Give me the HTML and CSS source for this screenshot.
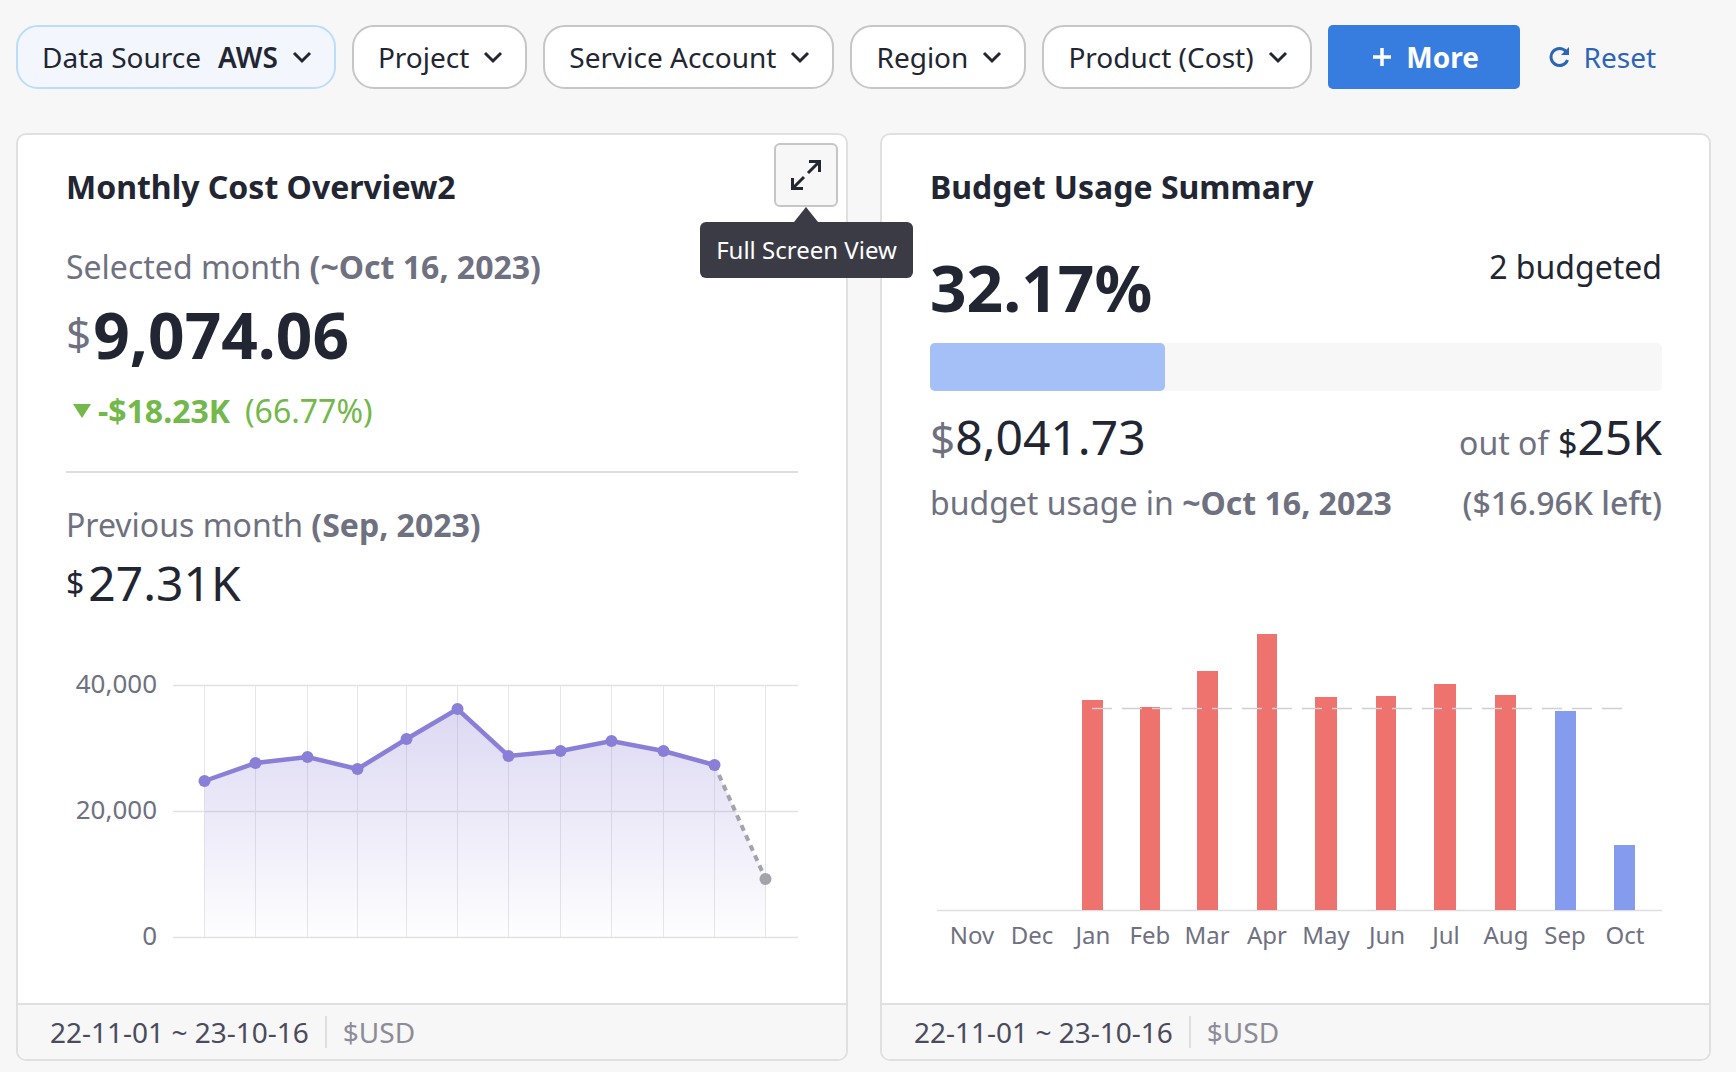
FILE: index.html
```html
<!DOCTYPE html>
<html lang="en">
<head>
    <meta charset="UTF-8">
    <title>Cost Dashboard</title>
    <link rel="stylesheet" href="styles.css">
</head>
<body>

    <div class="filters">
        <button class="filter filter-active"><span>Data Source</span><b class="filter-value">AWS</b><svg class="chevron" viewBox="0 0 20 13"><path d="M2 2l8 8 8-8"/></svg></button>
        <button class="filter"><span>Project</span><svg class="chevron" viewBox="0 0 20 13"><path d="M2 2l8 8 8-8"/></svg></button>
        <button class="filter"><span>Service Account</span><svg class="chevron" viewBox="0 0 20 13"><path d="M2 2l8 8 8-8"/></svg></button>
        <button class="filter"><span>Region</span><svg class="chevron" viewBox="0 0 20 13"><path d="M2 2l8 8 8-8"/></svg></button>
        <button class="filter"><span>Product (Cost)</span><svg class="chevron" viewBox="0 0 20 13"><path d="M2 2l8 8 8-8"/></svg></button>
        <button class="more-btn">
            <svg class="plus" viewBox="0 0 20 20"><path d="M10 1v18M1 10h18"/></svg>
            More</button>
        <button class="reset-btn">
            <svg class="reset-icon" viewBox="0 0 22 22"><path d="M18.5 14a8.500 8.500 0 1 1-1.500-8.500"/><path class="reset-head" d="M20 1v8h-8z"/></svg>
            Reset</button>
    </div>

    <div class="cards">
        <section class="card">
            <div class="card-body">
                <h2 class="card-title">Monthly Cost Overview2</h2>
                <p class="label label-first">Selected month <b>(~Oct 16, 2023)</b></p>
                <p class="value-main"><span class="cur">$</span>9,074.06</p>
                <p class="delta"><span class="delta-arrow"></span><b>-$18.23K</b><span class="delta-pct">(66.77%)</span></p>
                <hr class="divider">
                <p class="label">Previous month <b>(Sep, 2023)</b></p>
                <p class="value-prev"><span class="cur-dark">$</span>27.31K</p>

                <svg class="line-chart" viewBox="67 650 731 310">
                    <defs>
                        <linearGradient id="areaFill" gradientUnits="userSpaceOnUse" x1="0" y1="709" x2="0" y2="937">
                            <stop offset="0" stop-color="#8a7fd6" stop-opacity="0.3"/>
                            <stop offset="1" stop-color="#8a7fd6" stop-opacity="0.01"/>
                        </linearGradient>
                    </defs>
                    <g class="grid-h">
                        <path d="M173 685.500H798M173 811.500H798M173 937.500H798"/>
                    </g>
                    <g class="grid-v">
                        <path d="M204.500 685V937M255.500 685V937M307.500 685V937M357.500 685V937M406.500 685V937M457.500 685V937M508.500 685V937M560.500 685V937M611.500 685V937M663.500 685V937M714.500 685V937M765.500 685V937"/>
                    </g>
                    <path fill="url(#areaFill)" d="M204.500 781L255.500 763 307.500 757 357.500 769 406.500 739 457.500 709 508.500 756 560.500 751 611.500 741 663.500 751 714.500 765 765.500 879V937H204.500z"/>
                    <path class="line-forecast" d="M714.500 765L765.500 879"/>
                    <path class="line-cost" d="M204.500 781L255.500 763 307.500 757 357.500 769 406.500 739 457.500 709 508.500 756 560.500 751 611.500 741 663.500 751 714.500 765"/>
                    <g class="dots">
                        <circle cx="204.500" cy="781" r="6"/><circle cx="255.500" cy="763" r="6"/><circle cx="307.500" cy="757" r="6"/>
                        <circle cx="357.500" cy="769" r="6"/><circle cx="406.500" cy="739" r="6"/><circle cx="457.500" cy="709" r="6"/>
                        <circle cx="508.500" cy="756" r="6"/><circle cx="560.500" cy="751" r="6"/><circle cx="611.500" cy="741" r="6"/>
                        <circle cx="663.500" cy="751" r="6"/><circle cx="714.500" cy="765" r="6"/>
                    </g>
                    <circle class="dot-forecast" cx="765.500" cy="879" r="6"/>
                    <g class="axis-text axis-y">
                        <text x="157" y="693">40,000</text>
                        <text x="157" y="819">20,000</text>
                        <text x="157" y="945">0</text>
                    </g>
                </svg>
            </div>
            <div class="card-foot"><span class="foot-date">22-11-01 ~ 23-10-16</span><span class="foot-cur">$USD</span></div>

            <button class="expand-btn">
                <svg class="expand-icon" viewBox="0 0 30 30"><path d="M18 1.500h10.500V12M28.500 1.500L17 13M1.500 18v10.500H12M1.500 28.500L13 17"/></svg>
            </button>
            <div class="tooltip">Full Screen View</div>
        </section>

        <section class="card">
            <div class="card-body budget-body">
                <h2 class="card-title">Budget Usage Summary</h2>
                <div class="usage-row">
                    <span class="usage-pct">32.17%</span>
                    <span class="usage-count">2 budgeted</span>
                </div>
                <div class="bar-track"><div class="bar-fill" style="width: 32.17%"></div></div>
                <div class="spread amount-row">
                    <span class="amount"><span class="cur-light">$</span>8,041.73</span>
                    <span class="budget-total"><span class="out-of">out of</span> <span class="cur-total">$</span>25K</span>
                </div>
                <div class="spread usage-note">
                    <span>budget usage in <b>~Oct 16, 2023</b></span>
                    <span class="usage-left">($16.96K left)</span>
                </div>

                <svg class="bar-chart" viewBox="930 620 732 335">
                    <path class="base-line" d="M937 910.500H1662"/>
                    <g class="bars-over">
                        <rect x="1082" y="700" width="21" height="210"/>
                        <rect x="1140" y="707" width="20" height="203"/>
                        <rect x="1197" y="671" width="21" height="239"/>
                        <rect x="1257" y="634" width="20" height="276"/>
                        <rect x="1315" y="697" width="22" height="213"/>
                        <rect x="1376" y="696" width="20" height="214"/>
                        <rect x="1434" y="684" width="22" height="226"/>
                        <rect x="1495" y="695" width="21" height="215"/>
                    </g>
                    <g class="bars-under">
                        <rect x="1555" y="711" width="21" height="199"/>
                        <rect x="1614" y="845" width="21" height="65"/>
                    </g>
                    <path class="budget-line" d="M1092 708.500H1623"/>
                    <g class="axis-text axis-month">
                        <text x="972" y="944">Nov</text>
                        <text x="1032" y="944">Dec</text>
                        <text x="1093" y="944">Jan</text>
                        <text x="1150" y="944">Feb</text>
                        <text x="1207" y="944">Mar</text>
                        <text x="1267" y="944">Apr</text>
                        <text x="1326" y="944">May</text>
                        <text x="1387" y="944">Jun</text>
                        <text x="1446" y="944">Jul</text>
                        <text x="1506" y="944">Aug</text>
                        <text x="1565" y="944">Sep</text>
                        <text x="1625" y="944">Oct</text>
                    </g>
                </svg>
            </div>
            <div class="card-foot"><span class="foot-date">22-11-01 ~ 23-10-16</span><span class="foot-cur">$USD</span></div>
        </section>
    </div>

</body>
</html>
```

FILE: styles.css
```css
body {
    margin: 0;
    padding: 25px 25px 0 16px;
    background-color: #f7f7f7;
    font-family: "Noto Sans", Arial, sans-serif;
    color: #222532;
    height: 1047px;
    overflow: hidden;
}
p, h2 {
    margin: 0;
}

/* filter bar */
.filters {
    display: flex;
    align-items: center;
    gap: 16px;
    height: 64px;
}
.filter {
    display: flex;
    align-items: center;
    height: 64px;
    padding: 0 22px 0 24px;
    background-color: white;
    border: 2px solid #c6c6c8;
    border-radius: 22px;
    font-family: inherit;
    font-size: 28px;
    color: #222532;
    white-space: nowrap;
}
.filter-active {
    background-color: #f3f7fd;
    border-color: #bcdcfb;
}
.filter-value {
    margin-left: 17px;
    font-weight: 600;
}
.chevron {
    width: 20px;
    height: 13px;
    margin-left: 14px;
    fill: none;
    stroke: #222532;
    stroke-width: 3;
}
.more-btn {
    display: flex;
    align-items: center;
    justify-content: center;
    gap: 14px;
    box-sizing: border-box;
    width: 192px;
    height: 64px;
    padding: 0 0 0 4px;
    background-color: #377de0;
    border: none;
    border-radius: 5px;
    color: white;
    font-family: inherit;
    font-size: 28px;
    font-weight: 700;
}
.plus {
    width: 20px;
    height: 20px;
    fill: none;
    stroke: white;
    stroke-width: 3.500;
}
.reset-btn {
    display: flex;
    align-items: center;
    gap: 13px;
    margin-left: 13px;
    padding: 0;
    background: none;
    border: none;
    color: #2b64b8;
    font-family: inherit;
    font-size: 28px;
}
.reset-icon {
    width: 22px;
    height: 22px;
    fill: none;
    stroke: #2b64b8;
    stroke-width: 3;
}
.reset-head {
    fill: #2b64b8;
    stroke: none;
}

/* cards */
.cards {
    display: grid;
    grid-template-columns: 832px 831px;
    gap: 32px;
    margin-top: 44px;
}
.card {
    position: relative;
    display: flex;
    flex-direction: column;
    box-sizing: border-box;
    height: 928px;
    background-color: white;
    border: 2px solid #e0e0e0;
    border-radius: 10px;
}
.card-body {
    flex: 1;
    padding: 30px 48px 0 48px;
}
.budget-body {
    padding-right: 47px;
}
.card-title {
    font-size: 32px;
    line-height: 44px;
    font-weight: 700;
}
.label {
    margin-top: 32px;
    font-size: 32px;
    line-height: 40px;
    color: #6f7180;
}
.label-first {
    margin-top: 38px;
}
.label b {
    font-weight: 700;
}
.value-main {
    margin-top: 11px;
    font-size: 64px;
    line-height: 70px;
    font-weight: 700;
}
.cur {
    font-size: 44px;
    font-weight: 400;
    color: #6f7180;
    vertical-align: 9px;
    margin-right: 2px;
}
.delta {
    display: flex;
    align-items: center;
    margin-top: 21px;
    font-size: 32px;
    line-height: 40px;
    color: #72b84a;
}
.delta-arrow {
    width: 0;
    height: 0;
    margin: 0 7px 0 7px;
    border-left: 9px solid transparent;
    border-right: 9px solid transparent;
    border-top: 14px solid #72b84a;
}
.delta-pct {
    margin-left: 15px;
}
.divider {
    margin: 40px 0 0;
    border: none;
    border-top: 2px solid #dedede;
}
.value-prev {
    margin-top: 10px;
    font-size: 48px;
    line-height: 56px;
}
.cur-dark {
    font-size: 32px;
    vertical-align: 6px;
    margin-right: 4px;
}
.line-chart {
    display: block;
    width: 731px;
    height: 310px;
    margin: 39px 0 0 1px;
}
.grid-h path {
    fill: none;
    stroke: #e2e2e6;
    stroke-width: 1.500;
}
.grid-v path {
    fill: none;
    stroke: #e6e6ea;
    stroke-width: 1;
}
.line-cost {
    fill: none;
    stroke: #8a7fd6;
    stroke-width: 4.500;
}
.line-forecast {
    fill: none;
    stroke: #a3a3ab;
    stroke-width: 4;
    stroke-dasharray: 6 5;
}
.dots circle {
    fill: #8a7fd6;
}
.dot-forecast {
    fill: #a3a3ab;
}
.axis-text text {
    font-size: 24px;
    fill: #6f7180;
    text-anchor: end;
}
.axis-y text {
    font-size: 26px;
}
.axis-month text {
    text-anchor: middle;
}

/* budget card */
.usage-row {
    display: flex;
    justify-content: space-between;
    margin-top: 34px;
    height: 90px;
}
.usage-pct {
    font-size: 64px;
    line-height: 90px;
    font-weight: 700;
}
.usage-count {
    margin-top: 4px;
    font-size: 32px;
    line-height: 40px;
}
.bar-track {
    height: 48px;
    margin-top: 10px;
    background-color: #f7f7f7;
    border-radius: 5px;
}
.bar-fill {
    height: 100%;
    background-color: #a5bff7;
    border-radius: 5px;
}
.spread {
    display: flex;
    justify-content: space-between;
}
.amount-row {
    align-items: baseline;
    margin-top: 14px;
    line-height: 64px;
}
.amount {
    font-size: 48px;
}
.cur-light {
    color: #6f7180;
    font-size: 44px;
}
.budget-total {
    font-size: 48px;
}
.out-of {
    font-size: 32px;
    color: #6f7180;
    margin-right: -3px;
}
.cur-total {
    font-size: 34px;
}
.usage-note {
    margin-top: 8px;
    font-size: 32px;
    line-height: 40px;
    color: #6f7180;
}
.usage-left {
    font-weight: 500;
}
.bar-chart {
    display: block;
    width: 732px;
    height: 335px;
    margin-top: 97px;
}
.base-line {
    fill: none;
    stroke: #dedee2;
    stroke-width: 1.500;
}
.bars-over rect {
    fill: #ee726e;
}
.bars-under rect {
    fill: #859bee;
}
.budget-line {
    fill: none;
    stroke: #cfcfcf;
    stroke-width: 1.500;
    stroke-dasharray: 20 10;
}

/* footer */
.card-foot {
    display: flex;
    align-items: center;
    height: 54px;
    padding-left: 32px;
    background-color: #f7f7f7;
    border-top: 2px solid #e0e0e0;
    border-radius: 0 0 9px 9px;
    font-size: 28px;
    line-height: 32px;
    color: #4a4b5c;
}
.foot-date {
    padding-right: 16px;
    border-right: 2px solid #dedede;
}
.foot-cur {
    padding-left: 16px;
    color: #8c8c96;
}

/* expand button + tooltip */
.expand-btn {
    position: absolute;
    top: 8px;
    right: 8px;
    display: flex;
    align-items: center;
    justify-content: center;
    width: 64px;
    height: 64px;
    padding: 0;
    background-color: #f7f7f7;
    border: 2px solid #c6c6c8;
    border-radius: 6px;
}
.expand-icon {
    width: 30px;
    height: 30px;
    fill: none;
    stroke: #222532;
    stroke-width: 3;
}
.tooltip {
    position: absolute;
    top: 87px;
    left: 682px;
    z-index: 2;
    width: 213px;
    height: 56px;
    background-color: #3b3b46;
    border-radius: 6px;
    color: white;
    font-size: 24px;
    line-height: 56px;
    text-align: center;
}
.tooltip::before {
    content: "";
    position: absolute;
    top: -15px;
    left: 94px;
    border-left: 12px solid transparent;
    border-right: 12px solid transparent;
    border-bottom: 15px solid #3b3b46;
}
```
